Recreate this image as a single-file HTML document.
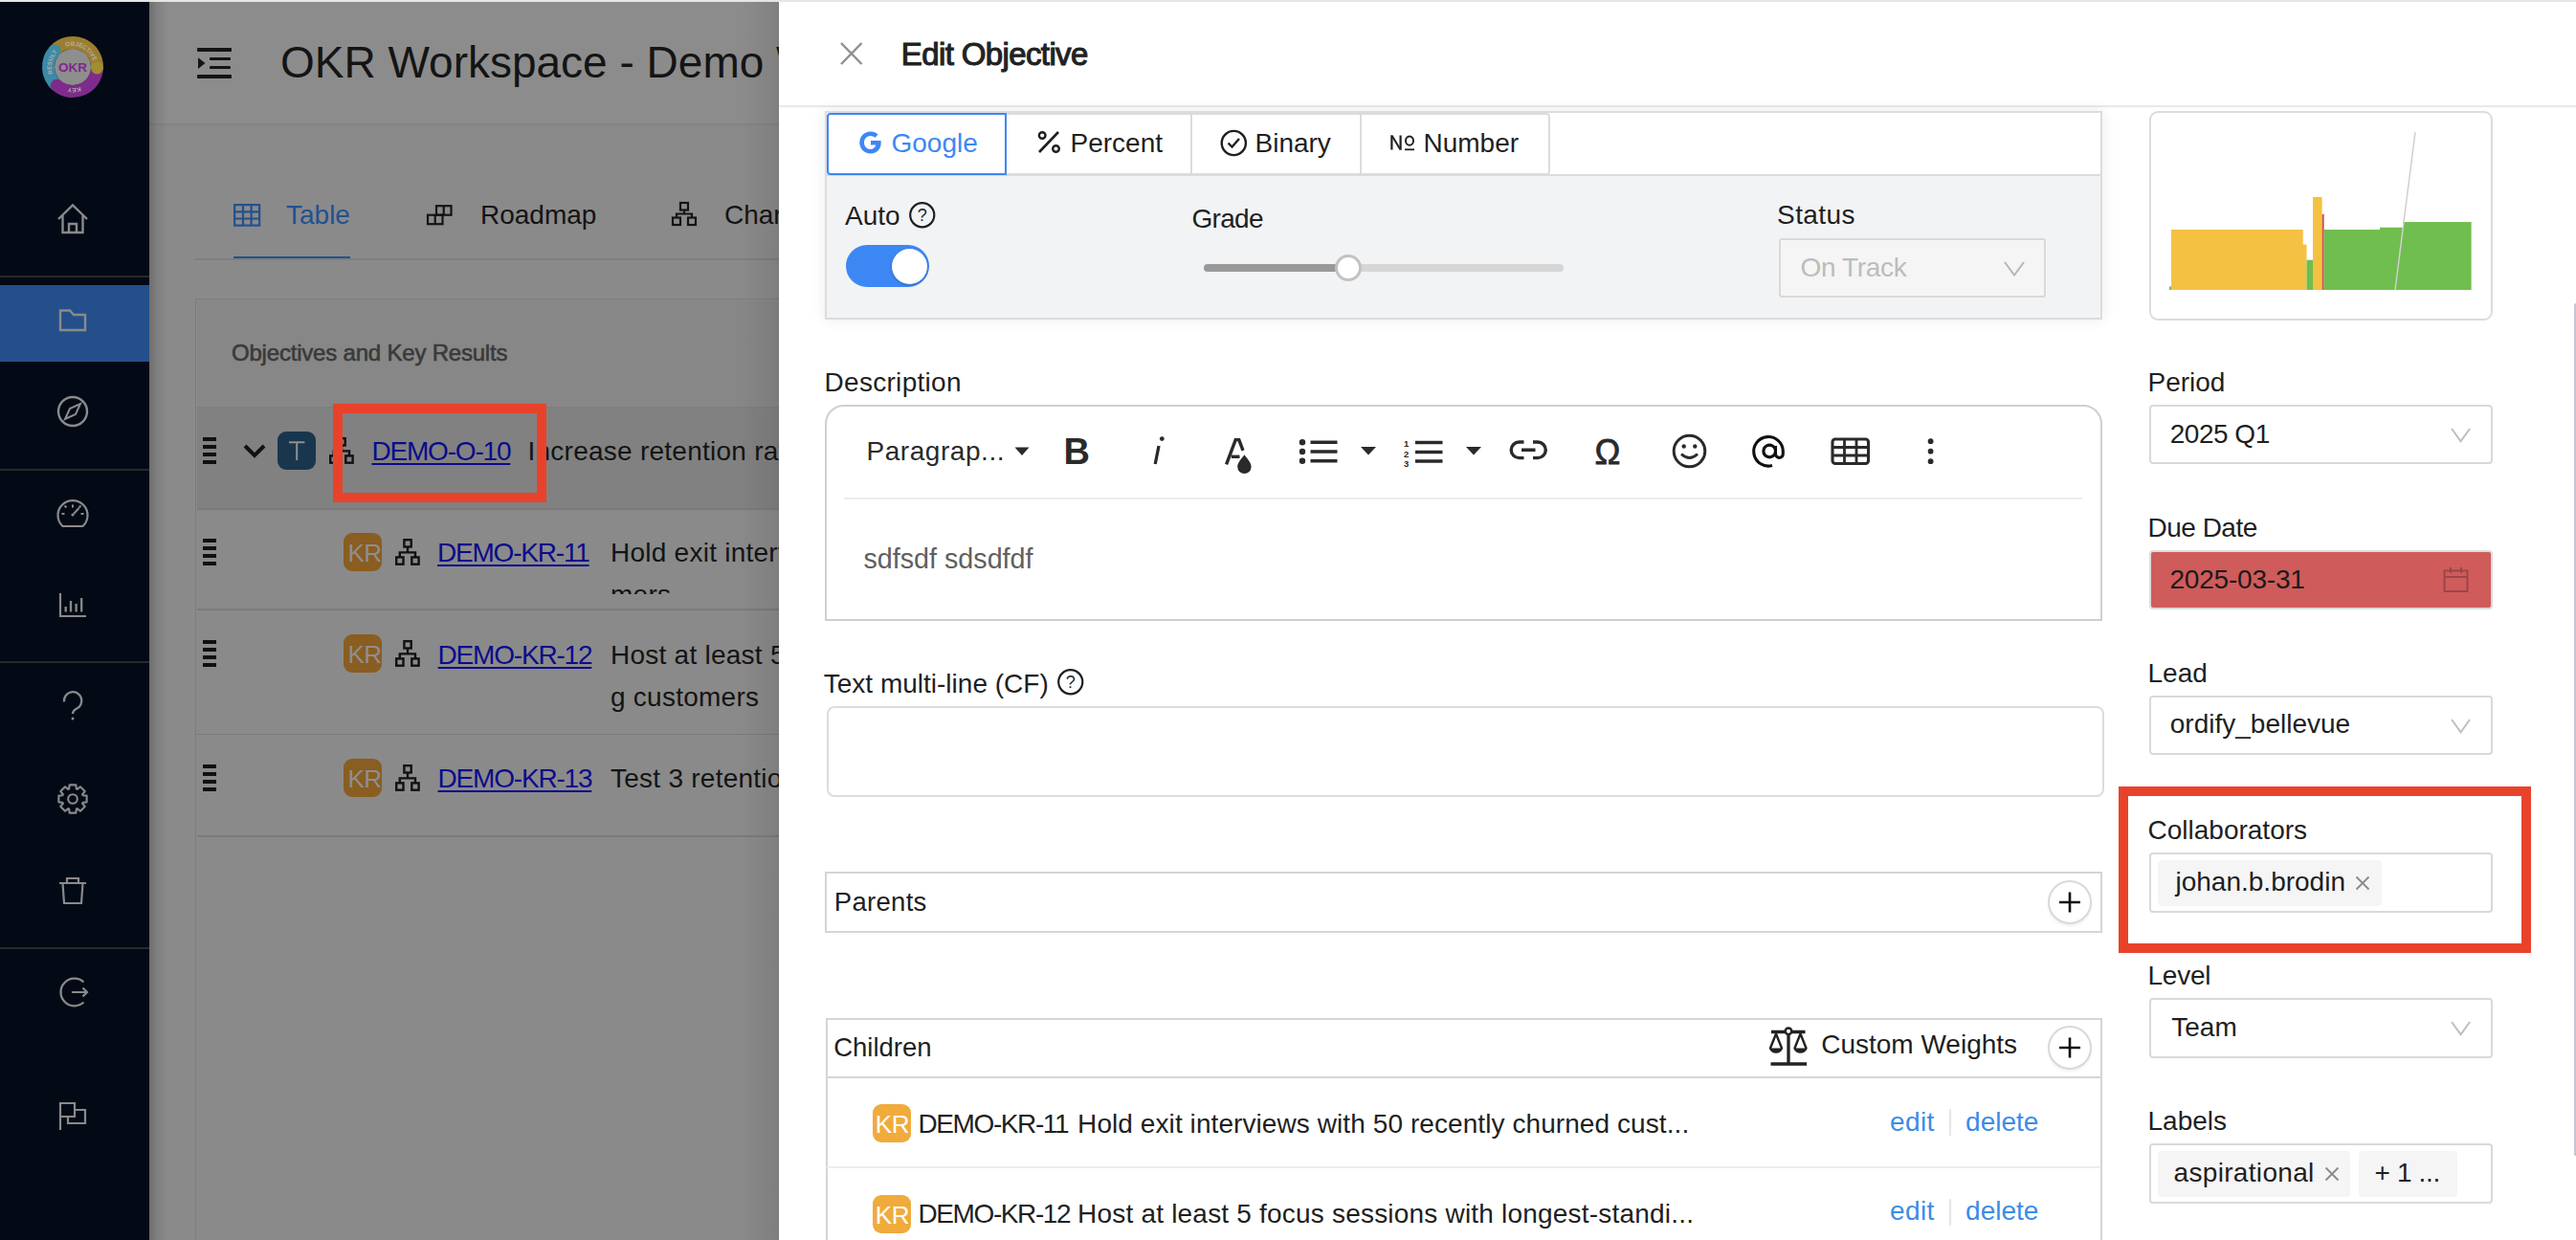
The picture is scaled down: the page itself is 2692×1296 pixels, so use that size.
<!DOCTYPE html>
<html><head><meta charset="utf-8">
<style>
html,body{margin:0;padding:0;}
body{width:2692px;height:1296px;overflow:hidden;position:relative;background:#e4e6e4;font-family:"Liberation Sans",sans-serif;}
.a{position:absolute;}
.t{position:absolute;white-space:nowrap;line-height:1;font-family:"Liberation Sans",sans-serif;}
svg{position:absolute;overflow:visible;}
</style></head>
<body>
<!-- ============ SIDEBAR ============ -->
<div class="a" id="sidebar" style="left:0;top:2px;width:156px;height:1294px;background:#030a16;">
</div>
<div class="a" style="left:0;top:288px;width:156px;height:2px;background:#2a2926;"></div>
<div class="a" style="left:0;top:298px;width:156px;height:80px;background:#244f8a;"></div>
<div class="a" style="left:0;top:490px;width:156px;height:2px;background:#2a2926;"></div>
<div class="a" style="left:0;top:691px;width:156px;height:2px;background:#2a2926;"></div>
<div class="a" style="left:0;top:990px;width:156px;height:2px;background:#2a2926;"></div>
<svg width="2692" height="1296" style="left:0;top:0;" viewBox="0 0 2692 1296">
  <!-- logo -->
  <defs><path id="lgc" d="M65.00,89.05 A22.0,22.0 0 1 1 87.00,50.95 A22.0,22.0 0 1 1 65.00,89.05"/></defs>
  <g fill="none" stroke-width="13">
   <path d="M101.48,70.89 A25.5,25.5 0 0 1 59.27,89.25" stroke="#7e2b8c"/>
   <path d="M59.27,89.25 A25.5,25.5 0 0 1 57.05,52.94" stroke="#3b8aa7"/>
   <path d="M57.05,52.94 A25.5,25.5 0 0 1 101.48,70.89" stroke="#9c7e2e"/>
  </g>
  <circle cx="59.27" cy="89.25" r="6.5" fill="#7e2b8c"/>
  <circle cx="57.05" cy="52.94" r="6.5" fill="#3b8aa7"/>
  <circle cx="101.48" cy="70.89" r="6.5" fill="#a08e30"/>
  <circle cx="76" cy="70" r="19" fill="#8e8e8e"/>
  <text x="76" y="74.8" text-anchor="middle" font-family="Liberation Sans" font-weight="bold" font-size="13.5" fill="#7d2a8c">OKR</text>
  <text font-family="Liberation Sans" font-size="6.3" font-weight="bold" fill="#b0b0b0" text-anchor="middle"><textPath href="#lgc" startOffset="28.03">RESULT</textPath></text>
  <text font-family="Liberation Sans" font-size="6.3" font-weight="bold" fill="#b0b0b0" text-anchor="middle"><textPath href="#lgc" startOffset="68.35">OBJECTIVE</textPath></text>
  <text font-family="Liberation Sans" font-size="6.3" font-weight="bold" fill="#b0b0b0" text-anchor="middle"><textPath href="#lgc" startOffset="125.56">KEY</textPath></text>

  <g fill="none" stroke="#8a8a8a" stroke-width="2.4" stroke-linejoin="miter">
    <!-- home -->
    <path d="M61,229 L76,214.5 L91,229 M65.5,225 V243 H86.5 V225 M72,243 V234 H80 V243"/>
    <!-- folder -->
    <path d="M63,324.5 H73 L77,329 H89 V345 H63 Z"/>
    <!-- compass -->
    <circle cx="76" cy="430" r="15"/>
    <path d="M68,438 L73,427 L84,422 L79,433 Z" stroke-width="2"/>
    <!-- gauge -->
    <path d="M65.5,550 A15.5,15.5 0 1 1 86.5,550 Z" stroke-width="2.2"/>
    <path d="M76,527.5 v3 M64.5,537 h3 M84.5,537 h3 M67.5,528.5 l2,2 M84.5,528.5 l-2,2 M77,537 L82.5,531" stroke-width="2"/>
    <circle cx="76" cy="538" r="1.6" fill="#8a8a8a" stroke="none"/>
    <!-- chart -->
    <path d="M63,620 V644 H90" stroke-width="2.2"/>
    <path d="M68.7,639.5 v-5.5 M74,639.5 v-11.5 M79.6,639.5 v-8.5 M85.2,639.5 v-14.5" stroke-width="2.3"/>
    <!-- question -->
    <path d="M67,733.5 A9.2,9.2 0 1 1 79.5,741 Q76,743 76,746" stroke-width="2.3"/>
    <circle cx="76" cy="751" r="1.5" fill="#8a8a8a" stroke="none"/>
    <!-- gear -->
    <path d="M72.17,824.48 L72.63,820.38 L79.37,820.38 L79.83,824.48 L80.73,824.85 L83.95,822.28 L88.72,827.05 L86.15,830.27 L86.52,831.17 L90.62,831.63 L90.62,838.37 L86.52,838.83 L86.15,839.73 L88.72,842.95 L83.95,847.72 L80.73,845.15 L79.83,845.52 L79.37,849.62 L72.63,849.62 L72.17,845.52 L71.27,845.15 L68.05,847.72 L63.28,842.95 L65.85,839.73 L65.48,838.83 L61.38,838.37 L61.38,831.63 L65.48,831.17 L65.85,830.27 L63.28,827.05 L68.05,822.28 L71.27,824.85 Z" stroke-width="2.1" stroke-linejoin="round"/>
    <circle cx="76" cy="835" r="4.8" stroke-width="2.1"/>
    <!-- trash -->
    <path d="M62,923 H90 M70,923 V918 H82 V923 M65.5,923 L67,944 H85 L86.5,923" stroke-width="2.2"/>
    <!-- logout -->
    <path d="M87.5,1026.5 A14.3,14.3 0 1 0 87.5,1047.5" stroke-width="2.3"/>
    <path d="M75,1037 H91 M86.5,1032.5 L91,1037 L86.5,1041.5" stroke-width="2.2"/>
    <!-- flag -->
    <path d="M63,1181 V1153 H78 V1167 H63 M78,1160 H89 V1174 H71 V1167" stroke-width="2.2"/>
  </g>
</svg>

<!-- ============ MAIN (dimmed) ============ -->
<div class="a" id="main" style="left:156px;top:2px;width:658px;height:1294px;background:#8a8a8a;overflow:hidden;">
</div>
<div class="a" style="left:156px;top:2px;width:658px;height:127px;background:#8c8c8c;"></div>
<div class="a" style="left:156px;top:129px;width:658px;height:1px;background:#838383;"></div>
<div class="a" style="left:156px;top:130px;width:658px;height:3px;background:linear-gradient(rgba(0,0,0,0.03),rgba(0,0,0,0));"></div>
<!-- hamburger -->
<div class="a" style="left:206px;top:50px;width:36px;height:3.5px;background:#141414;border-radius:1px;"></div>
<div class="a" style="left:219px;top:59.8px;width:22px;height:3px;background:#141414;border-radius:1px;"></div>
<div class="a" style="left:219px;top:69px;width:22px;height:3px;background:#141414;border-radius:1px;"></div>
<div class="a" style="left:206px;top:78.3px;width:36px;height:3.7px;background:#141414;border-radius:1px;"></div>
<svg width="10" height="14" style="left:206px;top:59px;"><path d="M1,1.2 L8.4,7 L1,12.9 Z" fill="#141414"/></svg>
<!-- title -->
<div class="t" id="title" style="left:293px;top:42px;font-size:46px;color:#141414;">OKR Workspace - Demo Workspace</div>
<!-- tabs -->
<svg width="30" height="24" style="left:244px;top:213px;" fill="none" stroke="#23518f" stroke-width="2.2">
  <rect x="1.1" y="1.1" width="26" height="21.5"/>
  <path d="M1,8.3 H27 M1,15.5 H27 M10,1 V22.6 M18.6,1 V22.6"/>
</svg>
<div class="t" id="tabTable" style="left:299px;top:211px;font-size:28px;color:#23518f;">Table</div>
<div class="a" style="left:244px;top:268px;width:122px;height:4px;background:#23518f;"></div>
<div class="a" style="left:204px;top:270px;width:610px;height:1.5px;background:#7e7e7e;"></div>
<svg width="30" height="24" style="left:445px;top:214px;" fill="none" stroke="#141414" stroke-width="2.2">
  <rect x="11" y="1.2" width="15.5" height="9.5"/>
  <rect x="2" y="10.7" width="15.5" height="9.5"/>
  <path d="M18.7,1.2 V10.7 M9.7,10.7 V20.2"/>
</svg>
<div class="t" id="tabRoad" style="left:502px;top:211px;font-size:28px;color:#141414;">Roadmap</div>
<svg width="30" height="30" style="left:701px;top:210px;" fill="none" stroke="#141414" stroke-width="2.2">
  <rect x="10" y="2" width="8" height="7.5"/>
  <rect x="2" y="17.5" width="8" height="7.5"/>
  <rect x="18" y="17.5" width="8" height="7.5"/>
  <path d="M14,9.5 V13.5 M6,17.5 V13.5 H22 V17.5"/>
</svg>
<div class="t" id="tabChart" style="left:757px;top:211px;font-size:28px;color:#141414;">Charts</div>

<!-- table -->
<div class="a" style="left:204px;top:312px;width:620px;height:990px;border-left:1.5px solid #7c7c7c;border-top:1.5px solid #7c7c7c;background:#8a8a8a;"></div>
<div class="a" style="left:206px;top:314px;width:620px;height:111px;background:#878787;"></div>
<div class="a" style="left:206px;top:425px;width:620px;height:1.5px;background:#7e7e7e;"></div>
<div class="t" id="thOKR" style="left:242px;top:356.7px;font-size:24px;color:#3a3a3a;-webkit-text-stroke:0.6px #3a3a3a;letter-spacing:-0.2px;">Objectives and Key Results</div>
<!-- row 1 -->
<div class="a" style="left:206px;top:426px;width:620px;height:106px;background:#818181;"></div>
<div class="a" style="left:206px;top:531px;width:620px;height:1.5px;background:#7b7b7b;"></div>
<div class="a" style="left:206px;top:636px;width:620px;height:1.5px;background:#7b7b7b;"></div>
<div class="a" style="left:206px;top:766.5px;width:620px;height:1.5px;background:#7b7b7b;"></div>
<div class="a" style="left:206px;top:873px;width:620px;height:1.5px;background:#7b7b7b;"></div>
<div class="a" style="left:212px;top:457px;width:14px;height:4px;background:#111;"></div>
<div class="a" style="left:212px;top:465px;width:14px;height:4px;background:#111;"></div>
<div class="a" style="left:212px;top:473px;width:14px;height:4px;background:#111;"></div>
<div class="a" style="left:212px;top:481px;width:14px;height:4px;background:#111;"></div>
<svg width="30" height="20" style="left:252px;top:462px;"><path d="M4,4 L14,14 L24,4" fill="none" stroke="#111" stroke-width="4"/></svg>
<div class="a" style="left:290px;top:451px;width:40px;height:40px;border-radius:9px;background:#19364f;"></div>
<svg width="20" height="24" style="left:300px;top:459px;"><path d="M2,3.2 H18.4 M10.2,3 V22" fill="none" stroke="#8f8f8f" stroke-width="2"/></svg>
<svg width="27" height="29" style="left:344px;top:457px;" fill="none" stroke="#111" stroke-width="2.4"><rect x="9.4" y="1.2" width="7.3" height="7.3"/><rect x="1.2" y="19.4" width="7.3" height="7.3"/><rect x="17.3" y="19.4" width="7.3" height="7.3"/><path d="M13,8.5 V14.4 M4.8,19.4 V14.4 H21 V19.4"/></svg>
<div class="t" id="link1" style="left:388.5px;top:458.3px;font-size:28px;color:#0b0b8c;text-decoration:underline;text-decoration-thickness:2px;text-underline-offset:3px;letter-spacing:-1.2px;">DEMO-O-10</div>
<div class="t" style="left:551.5px;top:458.3px;font-size:28px;color:#141414;letter-spacing:0.25px;">Increase retention rate for enterprise customers</div>
<div class="a" style="left:212px;top:563px;width:14px;height:4px;background:#111;"></div>
<div class="a" style="left:212px;top:571px;width:14px;height:4px;background:#111;"></div>
<div class="a" style="left:212px;top:579px;width:14px;height:4px;background:#111;"></div>
<div class="a" style="left:212px;top:587px;width:14px;height:4px;background:#111;"></div>
<div class="a" style="left:359px;top:557px;width:40px;height:40px;border-radius:9px;background:#8a5d21;"></div>
<div class="t" style="left:363.5px;top:565.0px;font-size:26px;color:#8f8f8f;letter-spacing:-0.5px;">KR</div>
<svg width="27" height="29" style="left:413px;top:563px;" fill="none" stroke="#111" stroke-width="2.4"><rect x="9.4" y="1.2" width="7.3" height="7.3"/><rect x="1.2" y="19.4" width="7.3" height="7.3"/><rect x="17.3" y="19.4" width="7.3" height="7.3"/><path d="M13,8.5 V14.4 M4.8,19.4 V14.4 H21 V19.4"/></svg>
<div class="t" id="link2" style="left:457px;top:564.3px;font-size:28px;color:#0b0b8c;text-decoration:underline;text-decoration-thickness:2px;text-underline-offset:3px;letter-spacing:-1.2px;">DEMO-KR-11</div>
<div class="a" style="left:638px;top:560px;width:400px;height:61px;overflow:hidden;"><div class="t" style="left:0px;top:4.3px;font-size:28px;color:#141414;letter-spacing:0.25px;">Hold exit interviews with 50</div>
<div class="t" style="left:0px;top:47.9px;font-size:28px;color:#141414;letter-spacing:0.25px;">mers</div>
</div>
<div class="a" style="left:212px;top:669px;width:14px;height:4px;background:#111;"></div>
<div class="a" style="left:212px;top:677px;width:14px;height:4px;background:#111;"></div>
<div class="a" style="left:212px;top:685px;width:14px;height:4px;background:#111;"></div>
<div class="a" style="left:212px;top:693px;width:14px;height:4px;background:#111;"></div>
<div class="a" style="left:359px;top:663px;width:40px;height:40px;border-radius:9px;background:#8a5d21;"></div>
<div class="t" style="left:363.5px;top:671.0px;font-size:26px;color:#8f8f8f;letter-spacing:-0.5px;">KR</div>
<svg width="27" height="29" style="left:413px;top:669px;" fill="none" stroke="#111" stroke-width="2.4"><rect x="9.4" y="1.2" width="7.3" height="7.3"/><rect x="1.2" y="19.4" width="7.3" height="7.3"/><rect x="17.3" y="19.4" width="7.3" height="7.3"/><path d="M13,8.5 V14.4 M4.8,19.4 V14.4 H21 V19.4"/></svg>
<div class="t" style="left:457.6px;top:671.1px;font-size:28px;color:#0b0b8c;text-decoration:underline;text-decoration-thickness:2px;text-underline-offset:3px;letter-spacing:-1.2px;">DEMO-KR-12</div>
<div class="t" style="left:638px;top:671.1px;font-size:28px;color:#141414;letter-spacing:0.25px;">Host at least 5 focus sessions</div>
<div class="t" style="left:638px;top:714.7px;font-size:28px;color:#141414;letter-spacing:0.25px;">g customers</div>
<div class="a" style="left:212px;top:799px;width:14px;height:4px;background:#111;"></div>
<div class="a" style="left:212px;top:807px;width:14px;height:4px;background:#111;"></div>
<div class="a" style="left:212px;top:815px;width:14px;height:4px;background:#111;"></div>
<div class="a" style="left:212px;top:823px;width:14px;height:4px;background:#111;"></div>
<div class="a" style="left:359px;top:793px;width:40px;height:40px;border-radius:9px;background:#8a5d21;"></div>
<div class="t" style="left:363.5px;top:801.0px;font-size:26px;color:#8f8f8f;letter-spacing:-0.5px;">KR</div>
<svg width="27" height="29" style="left:413px;top:799px;" fill="none" stroke="#111" stroke-width="2.4"><rect x="9.4" y="1.2" width="7.3" height="7.3"/><rect x="1.2" y="19.4" width="7.3" height="7.3"/><rect x="17.3" y="19.4" width="7.3" height="7.3"/><path d="M13,8.5 V14.4 M4.8,19.4 V14.4 H21 V19.4"/></svg>
<div class="t" style="left:457.6px;top:800.0px;font-size:28px;color:#0b0b8c;text-decoration:underline;text-decoration-thickness:2px;text-underline-offset:3px;letter-spacing:-1.2px;">DEMO-KR-13</div>
<div class="t" style="left:638px;top:800.0px;font-size:28px;color:#141414;letter-spacing:0.25px;">Test 3 retention offers</div>
<div class="a" style="left:348px;top:422px;width:203px;height:82.5px;border:10px solid #e8432a;"></div>


<!-- ============ DRAWER ============ -->
<div class="a" style="left:156px;top:2px;width:20px;height:1294px;background:linear-gradient(to right,rgba(0,0,0,0.21),rgba(0,0,0,0.08) 40%,rgba(0,0,0,0));"></div>
<div class="a" style="left:772px;top:2px;width:42px;height:1294px;background:linear-gradient(to right,rgba(0,0,0,0),rgba(0,0,0,0.08) 95%,rgba(0,0,0,0.12));"></div>
<!--DRAWER-START-->
<div class="a" style="left:814px;top:2px;width:1878.00px;height:1294.00px;box-sizing:border-box;background:#fff;"></div>
<svg width="26" height="26" style="left:877px;top:43px;" viewBox="0 0 26 26"><path d="M2,2 L23.5,24 M23.5,2 L2,24" stroke="#909090" stroke-width="2.5" fill="none"/></svg>
<div class="t" id="dtitle" style="left:941.8px;top:39.67px;font-size:33px;color:#222;-webkit-text-stroke:1.1px #222;letter-spacing:-0.62px;">Edit Objective</div>
<div class="a" style="left:814px;top:110px;width:1878.00px;height:1.50px;box-sizing:border-box;background:#e9e9e9;"></div>
<div class="a" style="left:814px;top:111.5px;width:1878.00px;height:4.50px;box-sizing:border-box;background:linear-gradient(rgba(0,0,0,0.015),rgba(0,0,0,0));"></div>
<div class="a" style="left:862px;top:116px;width:1335.00px;height:218.00px;box-sizing:border-box;border:2px solid #dcdcde;background:#fff;box-shadow:0 0 14px rgba(20,30,60,0.09);"></div>
<div class="a" style="left:864px;top:182px;width:1331.00px;height:150.00px;box-sizing:border-box;background:#f2f3f5;border-top:2px solid #dcdcde;"></div>
<div class="a" style="left:1050px;top:118px;width:196.00px;height:65.00px;box-sizing:border-box;border:2px solid #dcdcde;border-left:none;"></div>
<div class="a" style="left:1244px;top:118px;width:179.00px;height:65.00px;box-sizing:border-box;border:2px solid #dcdcde;border-left:none;"></div>
<div class="a" style="left:1421px;top:118px;width:199.00px;height:65.00px;box-sizing:border-box;border:2px solid #dcdcde;border-left:none;border-radius:0 4px 4px 0;"></div>
<div class="a" style="left:864px;top:118px;width:188.00px;height:65.00px;box-sizing:border-box;border:2px solid #3d87f5;border-radius:4px 0 0 4px;"></div>
<svg width="26" height="26" style="left:897px;top:136px;" viewBox="0 0 26 26"><path d="M23.5,11 H13 V15.5 H18.3 C17.4,18.3 15.4,20 12.6,20 C8.9,20 6,17 6,13 C6,9 8.9,6 12.6,6 C14.5,6 16.1,6.7 17.3,7.9 L20.6,4.6 C18.6,2.7 15.8,1.5 12.6,1.5 C6.3,1.5 1.3,6.6 1.3,13 C1.3,19.4 6.3,24.5 12.6,24.5 C19,24.5 23.7,20 23.7,13.2 C23.7,12.4 23.6,11.7 23.5,11 Z" fill="#3d87f5"/></svg>
<div class="t" id="sgoogle" style="left:931.5px;top:135.90px;font-size:28px;color:#3d87f5;">Google</div>
<svg width="25" height="25" style="left:1084px;top:136px;" viewBox="0 0 25 25"><path d="M2,23 L22,2" stroke="#1f1f1f" stroke-width="2.6"/><circle cx="5.2" cy="5.5" r="3.3" fill="none" stroke="#1f1f1f" stroke-width="2.4"/><circle cx="19.5" cy="19.5" r="3.3" fill="none" stroke="#1f1f1f" stroke-width="2.4"/></svg>
<div class="t" id="spercent" style="left:1118.5px;top:135.90px;font-size:28px;color:#1f1f1f;">Percent</div>
<svg width="29" height="29" style="left:1275px;top:135px;" viewBox="0 0 29 29"><circle cx="14.3" cy="14.5" r="12.6" fill="none" stroke="#1f1f1f" stroke-width="2.4"/><path d="M8.5,14.5 L12.5,18.5 L20,10" fill="none" stroke="#1f1f1f" stroke-width="2.4"/></svg>
<div class="t" id="sbinary" style="left:1311.5px;top:135.90px;font-size:28px;color:#1f1f1f;">Binary</div>
<svg width="28" height="19" style="left:1452px;top:140px;" viewBox="0 0 28 19"><path d="M2.4,16.6 V1.6 M11.6,16.6 V1.6" fill="none" stroke="#1f1f1f" stroke-width="2.2"/><path d="M1.3,1.6 H3.6 L12.7,16.6 H10.4 Z" fill="#1f1f1f"/><ellipse cx="21" cy="7.2" rx="4" ry="4.6" fill="none" stroke="#1f1f1f" stroke-width="2"/><path d="M16,16.3 H26" stroke="#1f1f1f" stroke-width="1.8"/></svg>
<div class="t" id="snumber" style="left:1487.5px;top:135.90px;font-size:28px;color:#1f1f1f;">Number</div>
<div class="t" id="lauto" style="left:883.1px;top:212.30px;font-size:28px;color:#1f1f1f;">Auto</div>
<svg width="27.5" height="27.5" style="left:950px;top:211px;" viewBox="0 0 27.5 27.5"><circle cx="13.75" cy="13.75" r="12.55" fill="none" stroke="#1f1f1f" stroke-width="2.2"/><text x="13.75" y="20.05" text-anchor="middle" font-family="Liberation Sans" font-size="18" fill="#1f1f1f">?</text></svg>
<div class="a" style="left:884px;top:256px;width:87.00px;height:44.00px;box-sizing:border-box;background:#3d87f5;border-radius:22px;"></div>
<div class="a" style="left:931.5px;top:259.5px;width:37.00px;height:37.00px;box-sizing:border-box;background:#fff;border-radius:50%;box-shadow:0 1px 3px rgba(0,0,0,0.25);"></div>
<div class="t" id="lgrade" style="left:1245.5px;top:215.30px;font-size:28px;color:#1f1f1f;letter-spacing:-0.7px;">Grade</div>
<div class="a" style="left:1258px;top:276px;width:376.00px;height:8.00px;box-sizing:border-box;background:#d6d6d6;border-radius:4px;"></div>
<div class="a" style="left:1258px;top:276px;width:151.00px;height:8.00px;box-sizing:border-box;background:#999;border-radius:4px 0 0 4px;"></div>
<div class="a" style="left:1395px;top:266px;width:28.00px;height:28.00px;box-sizing:border-box;background:#fff;border:3.5px solid #c2c2c2;border-radius:50%;"></div>
<div class="t" id="lstatus" style="left:1857.1px;top:211.30px;font-size:28px;color:#1f1f1f;letter-spacing:0.4px;">Status</div>
<div class="a" style="left:1859px;top:249px;width:279.00px;height:62.00px;box-sizing:border-box;background:#f5f5f5;border:2px solid #d9d9d9;border-radius:3px;"></div>
<div class="t" id="vstatus" style="left:1881.5px;top:266.30px;font-size:28px;color:#bcbcbc;letter-spacing:-0.35px;">On Track</div>
<svg width="22" height="16" style="left:2094px;top:273px;" viewBox="0 0 22 16"><path d="M1,1 L11.0,14.5 L21,1" fill="none" stroke="#b5b5b5" stroke-width="2"/></svg>
<div class="a" style="left:2245.5px;top:116.2px;width:359.00px;height:219.30px;box-sizing:border-box;border:2px solid #dcdcdc;border-radius:9px;"></div>
<svg width="330" height="190" style="left:2266px;top:117px;" viewBox="0 0 330 190"><path d="M1,186 V182.5 H3 V186 Z" fill="#6fbe4f"/>
<path d="M3,186 V123 H140.7 V138.6 H144.5 V186 Z" fill="#f4c142"/>
<path d="M144.5,186 V154.7 H151 V186 Z" fill="#6fbe4f"/>
<path d="M151,186 V89 H160.6 V186 Z" fill="#f4c142"/>
<path d="M160.6,186 V106.8 H162.7 V186 Z" fill="#d05050"/>
<path d="M162.7,186 V123 H221 V120.8 H245 V114.9 H316.6 V186 Z" fill="#6fbe4f"/>
<path d="M237,186 L258,20.8" stroke="#d0d0d0" stroke-width="1.5" fill="none"/></svg>
<div class="t" id="ldesc" style="left:861.5px;top:385.70px;font-size:28px;color:#1f1f1f;letter-spacing:0.3px;">Description</div>
<div class="a" style="left:862px;top:423px;width:1335.00px;height:226.00px;box-sizing:border-box;border:2px solid #cfcfcf;border-radius:20px 20px 0 0;"></div>
<div class="a" style="left:882px;top:519.5px;width:1294.00px;height:2.00px;box-sizing:border-box;background:#ececec;"></div>
<div class="t" id="tpara" style="left:905.5px;top:457.70px;font-size:28px;color:#2a2a2a;letter-spacing:0.55px;">Paragrap...</div>
<svg width="16" height="10" style="left:1060px;top:467px;" viewBox="0 0 16 10"><path d="M0.5,0.5 H15.5 L8,9 Z" fill="#2a2a2a"/></svg>
<div class="t" id="tbold" style="left:1111.5px;top:453.33px;font-size:38px;color:#2a2a2a;font-weight:bold;">B</div>
<svg width="16" height="34" style="left:1203px;top:455px;" viewBox="0 0 16 34"><circle cx="11.3" cy="3.6" r="2.4" fill="#2a2a2a"/><path d="M8,11 L4.2,30" stroke="#2a2a2a" stroke-width="3.3" fill="none"/></svg>
<svg width="32" height="40" style="left:1279px;top:456px;" viewBox="0 0 32 40"><path d="M2.6,29.4 L12.2,3.6 H15.8 L20,14.8" fill="none" stroke="#2a2a2a" stroke-width="3.4" stroke-linejoin="miter"/><path d="M7.8,21.3 H16.5" stroke="#2a2a2a" stroke-width="3.4"/><path d="M21.4,19.3 C17.5,24.5 14.2,28 14.2,31.8 A7.2,7.2 0 0 0 28.6,31.8 C28.6,28 25.3,24.5 21.4,19.3 Z" fill="#2a2a2a"/></svg>
<svg width="84" height="30" style="left:1357px;top:458px;" viewBox="0 0 84 30"><circle cx="4" cy="4.3" r="3.2" fill="#2a2a2a"/><circle cx="4" cy="14" r="3.2" fill="#2a2a2a"/><circle cx="4" cy="23.7" r="3.2" fill="#2a2a2a"/><path d="M12.5,4.3 H40.5 M12.5,14 H40.5 M12.5,23.7 H40.5" stroke="#2a2a2a" stroke-width="3.4"/><path d="M65,9 H81 L73,17.5 Z" fill="#2a2a2a"/></svg>
<svg width="84" height="32" style="left:1467px;top:457px;" viewBox="0 0 84 32"><text x="0" y="10" font-family="Liberation Sans" font-size="9.5" font-weight="bold" fill="#2a2a2a">1</text><text x="0" y="20.5" font-family="Liberation Sans" font-size="9.5" font-weight="bold" fill="#2a2a2a">2</text><text x="0" y="30.5" font-family="Liberation Sans" font-size="9.5" font-weight="bold" fill="#2a2a2a">3</text><path d="M12,5.5 H40.5 M12,15.5 H40.5 M12,25 H40.5" stroke="#2a2a2a" stroke-width="3.4"/><path d="M65,10 H81 L73,18.5 Z" fill="#2a2a2a"/></svg>
<svg width="42" height="25" style="left:1577px;top:459px;" viewBox="0 0 42 25"><path d="M15.5,3 H10.5 A8.3,8.3 0 0 0 10.5,19.6 H15.5 M25,3 H30 A8.3,8.3 0 0 1 30,19.6 H25 M13,11.3 H27.5" fill="none" stroke="#2a2a2a" stroke-width="3.4"/></svg>
<div class="t" id="tomega" style="left:1666.5px;top:454.53px;font-size:36px;color:#2a2a2a;-webkit-text-stroke:0.8px #2a2a2a;">&#937;</div>
<svg width="38" height="38" style="left:1747px;top:453px;" viewBox="0 0 38 38"><circle cx="18.5" cy="18.5" r="16.3" fill="none" stroke="#2a2a2a" stroke-width="3"/><circle cx="12.7" cy="13.5" r="2.2" fill="#2a2a2a"/><circle cx="24.3" cy="13.5" r="2.2" fill="#2a2a2a"/><path d="M10,21.5 Q18.5,29.5 27,21.5" fill="none" stroke="#2a2a2a" stroke-width="2.8"/></svg>
<svg width="38" height="38" style="left:1831px;top:453px;" viewBox="0 0 38 38"><path d="M24.5,18.5 A6.3,6.3 0 1 1 24.5,18.4 Z M24.5,13 V21.5 A3.8,3.8 0 0 0 32.3,21.5 V18.5 A15.3,15.3 0 1 0 21,33.6" fill="none" stroke="#111" stroke-width="3.1"/></svg>
<svg width="42" height="30" style="left:1913px;top:457px;" viewBox="0 0 42 30"><rect x="2" y="2" width="37.5" height="25.5" rx="3" fill="none" stroke="#2a2a2a" stroke-width="3.1"/><path d="M2,10.5 H39.5 M2,19 H39.5 M14.5,2 V27.5 M27,2 V27.5" stroke="#2a2a2a" stroke-width="2.8"/></svg>
<svg width="12" height="30" style="left:2012px;top:457px;" viewBox="0 0 12 30"><circle cx="5.6" cy="4.2" r="2.9" fill="#2a2a2a"/><circle cx="5.6" cy="14.7" r="2.9" fill="#2a2a2a"/><circle cx="5.6" cy="25.2" r="2.9" fill="#2a2a2a"/></svg>
<div class="t" id="tcontent" style="left:902.5px;top:569.71px;font-size:28.7px;color:#606060;">sdfsdf sdsdfdf</div>
<div class="t" id="ltml" style="left:860.8px;top:700.70px;font-size:28px;color:#1f1f1f;">Text multi-line (CF)</div>
<svg width="27.5" height="27.5" style="left:1105px;top:699px;" viewBox="0 0 27.5 27.5"><circle cx="13.75" cy="13.75" r="12.55" fill="none" stroke="#1f1f1f" stroke-width="2.2"/><text x="13.75" y="20.05" text-anchor="middle" font-family="Liberation Sans" font-size="18" fill="#1f1f1f">?</text></svg>
<div class="a" style="left:864px;top:737.5px;width:1334.50px;height:95.00px;box-sizing:border-box;border:2px solid #dcdcde;border-radius:8px;"></div>
<div class="a" style="left:862px;top:911px;width:1335.00px;height:63.50px;box-sizing:border-box;border:2px solid #d5d5d5;"></div>
<div class="t" id="lparents" style="left:871.8px;top:928.72px;font-size:27.5px;color:#1f1f1f;letter-spacing:0.3px;">Parents</div>
<div class="a" style="left:2140px;top:919.7px;width:46.00px;height:46.00px;box-sizing:border-box;border:2px solid #d9d9d9;border-radius:50%;background:#fff;box-shadow:0 2px 3px rgba(0,0,0,0.06);"></div>
<svg width="24" height="24" style="left:2151px;top:930.7px;" viewBox="0 0 24 24"><path d="M12,1.5 V22.5 M1,12 H23" stroke="#111" stroke-width="2.6" fill="none"/></svg>
<div class="a" style="left:862.5px;top:1063.5px;width:1334.50px;height:246.50px;box-sizing:border-box;border:2px solid #d5d5d5;"></div>
<div class="a" style="left:864px;top:1125px;width:1331.00px;height:2.00px;box-sizing:border-box;background:#d5d5d5;"></div>
<div class="t" id="lchildren" style="left:871.2px;top:1081.02px;font-size:27.5px;color:#1f1f1f;">Children</div>
<svg width="44" height="42" style="left:1848px;top:1073px;" viewBox="0 0 44 42"><circle cx="21" cy="4.8" r="3.3" fill="none" stroke="#222" stroke-width="2.4"/><path d="M21,8 V37.5 M3,5.5 H17.7 M24.3,5.5 H38.5 M2.5,39 H40" stroke="#222" stroke-width="3.3" fill="none"/><path d="M8,7.5 L2,22.5 A6.5,6.5 0 0 0 14,22.5 Z M33.5,7.5 L27.5,22.5 A6.5,6.5 0 0 0 39.5,22.5 Z" fill="none" stroke="#222" stroke-width="2.4" stroke-linejoin="round"/><path d="M2.5,22.5 A6,6 0 0 0 13.5,22.5 Z M28,22.5 A6,6 0 0 0 39,22.5 Z" fill="#222"/></svg>
<div class="t" id="lcw" style="left:1903.2px;top:1078.30px;font-size:28px;color:#1f1f1f;">Custom Weights</div>
<div class="a" style="left:2140px;top:1071.5px;width:46.00px;height:46.00px;box-sizing:border-box;border:2px solid #d9d9d9;border-radius:50%;background:#fff;box-shadow:0 2px 3px rgba(0,0,0,0.06);"></div>
<svg width="24" height="24" style="left:2151px;top:1082.5px;" viewBox="0 0 24 24"><path d="M12,1.5 V22.5 M1,12 H23" stroke="#111" stroke-width="2.6" fill="none"/></svg>
<div class="a" style="left:912px;top:1154px;width:40.00px;height:40.00px;box-sizing:border-box;background:#f0ab3c;border-radius:9px;"></div>
<div class="t" style="left:914.8px;top:1162.19px;font-size:26px;color:#ffffff;letter-spacing:-0.5px;">KR</div>
<div class="t" style="left:959.5px;top:1161.30px;font-size:28px;color:#1f1f1f;letter-spacing:-1.4px;">DEMO-KR-11</div>
<div class="t" id="c1" style="left:1126.1px;top:1161.30px;font-size:28px;color:#1f1f1f;letter-spacing:0.08px;">Hold exit interviews with 50 recently churned cust...</div>
<div class="a" style="left:864px;top:1219px;width:1331.00px;height:2.00px;box-sizing:border-box;background:#ededed;"></div>
<div class="t" id="edit1" style="left:1975.0px;top:1158.80px;font-size:28px;color:#3c8ce7;letter-spacing:0.4px;">edit</div>
<div class="a" style="left:2037px;top:1159px;width:2.00px;height:28.00px;box-sizing:border-box;background:#e6e6e6;"></div>
<div class="t" id="del1" style="left:2054.1px;top:1158.80px;font-size:28px;color:#3c8ce7;">delete</div>
<div class="a" style="left:912px;top:1248.5px;width:40.00px;height:40.00px;box-sizing:border-box;background:#f0ab3c;border-radius:9px;"></div>
<div class="t" style="left:914.8px;top:1256.69px;font-size:26px;color:#ffffff;letter-spacing:-0.5px;">KR</div>
<div class="t" style="left:959.5px;top:1254.80px;font-size:28px;color:#1f1f1f;letter-spacing:-1.4px;">DEMO-KR-12</div>
<div class="t" id="c2" style="left:1126.1px;top:1254.80px;font-size:28px;color:#1f1f1f;letter-spacing:0.2px;">Host at least 5 focus sessions with longest-standi...</div>
<div class="t" style="left:1975.0px;top:1252.30px;font-size:28px;color:#3c8ce7;letter-spacing:0.4px;">edit</div>
<div class="a" style="left:2037px;top:1252.5px;width:2.00px;height:28.00px;box-sizing:border-box;background:#e6e6e6;"></div>
<div class="t" style="left:2054.1px;top:1252.30px;font-size:28px;color:#3c8ce7;">delete</div>
<div class="t" id="lperiod" style="left:2244.5px;top:385.50px;font-size:28px;color:#1f1f1f;">Period</div>
<div class="a" style="left:2246px;top:422.7px;width:359.00px;height:62.30px;box-sizing:border-box;border:2px solid #d9d9d9;border-radius:4px;background:#fff;"></div>
<div class="t" id="vperiod" style="left:2267.8px;top:439.90px;font-size:28px;color:#1f1f1f;letter-spacing:-0.5px;">2025 Q1</div>
<svg width="21.09999999999991" height="15.699999999999989" style="left:2560.8px;top:447.0px;" viewBox="0 0 21.09999999999991 15.699999999999989"><path d="M1,1 L10.549999999999955,14.199999999999989 L20.09999999999991,1" fill="none" stroke="#bfbfbf" stroke-width="2"/></svg>
<div class="t" id="ldue" style="left:2244.5px;top:537.70px;font-size:28px;color:#1f1f1f;letter-spacing:-0.5px;">Due Date</div>
<div class="a" style="left:2246px;top:574.6px;width:359.00px;height:62.40px;box-sizing:border-box;border:2px solid #dcdcdc;border-radius:4px;background:#d05b5b;"></div>
<div class="t" id="vdue" style="left:2267.5px;top:591.80px;font-size:28px;color:#1a1a1a;letter-spacing:-0.2px;">2025-03-31</div>
<svg width="28" height="28" style="left:2553px;top:592px;" viewBox="0 0 28 28"><rect x="1.5" y="4.5" width="24" height="21.5" fill="none" stroke="#9b4646" stroke-width="2"/><path d="M1.5,11 H25.5 M8,1 V7 M19,1 V7" stroke="#9b4646" stroke-width="2"/></svg>
<div class="t" id="llead" style="left:2244.5px;top:689.60px;font-size:28px;color:#1f1f1f;">Lead</div>
<div class="a" style="left:2246px;top:726.5px;width:359.00px;height:62.50px;box-sizing:border-box;border:2px solid #d9d9d9;border-radius:4px;background:#fff;"></div>
<div class="t" id="vlead" style="left:2267.8px;top:742.60px;font-size:28px;color:#1f1f1f;">ordify_bellevue</div>
<svg width="21.09999999999991" height="15.700000000000045" style="left:2560.8px;top:750.8px;" viewBox="0 0 21.09999999999991 15.700000000000045"><path d="M1,1 L10.549999999999955,14.200000000000045 L20.09999999999991,1" fill="none" stroke="#bfbfbf" stroke-width="2"/></svg>
<div class="t" id="lcollab" style="left:2244.5px;top:854.30px;font-size:28px;color:#1f1f1f;">Collaborators</div>
<div class="a" style="left:2246px;top:891px;width:359.00px;height:63.00px;box-sizing:border-box;border:2px solid #d9d9d9;border-radius:4px;background:#fff;"></div>
<div class="a" style="left:2255px;top:899px;width:234.00px;height:47.50px;box-sizing:border-box;background:#f5f5f5;border-radius:4px;"></div>
<div class="t" id="vcollab" style="left:2273.5px;top:908.30px;font-size:28px;color:#1f1f1f;">johan.b.brodin</div>
<svg width="16" height="16" style="left:2461px;top:915px;" viewBox="0 0 16 16"><path d="M1.5,1.5 L14.5,14.5 M14.5,1.5 L1.5,14.5" stroke="#8a8a8a" stroke-width="1.8"/></svg>
<div class="a" style="left:2214px;top:822px;width:431.00px;height:174.00px;box-sizing:border-box;border:10px solid #e8432a;"></div>
<div class="t" id="llevel" style="left:2244.5px;top:1006.30px;font-size:28px;color:#1f1f1f;letter-spacing:-0.25px;">Level</div>
<div class="a" style="left:2246px;top:1043px;width:359.00px;height:63.00px;box-sizing:border-box;border:2px solid #d9d9d9;border-radius:4px;background:#fff;"></div>
<div class="t" id="vlevel" style="left:2269.3px;top:1060.30px;font-size:28px;color:#1f1f1f;">Team</div>
<svg width="21.09999999999991" height="15.700000000000045" style="left:2560.8px;top:1067.3px;" viewBox="0 0 21.09999999999991 15.700000000000045"><path d="M1,1 L10.549999999999955,14.200000000000045 L20.09999999999991,1" fill="none" stroke="#bfbfbf" stroke-width="2"/></svg>
<div class="t" id="llabels" style="left:2244.5px;top:1158.30px;font-size:28px;color:#1f1f1f;">Labels</div>
<div class="a" style="left:2246px;top:1195px;width:359.00px;height:63.00px;box-sizing:border-box;border:2px solid #d9d9d9;border-radius:4px;background:#fff;"></div>
<div class="a" style="left:2255px;top:1203px;width:201.00px;height:47.50px;box-sizing:border-box;background:#f5f5f5;border-radius:4px;"></div>
<div class="t" id="vlab" style="left:2271.5px;top:1212.30px;font-size:28px;color:#1f1f1f;letter-spacing:0.33px;">aspirational</div>
<svg width="16" height="16" style="left:2429px;top:1219px;" viewBox="0 0 16 16"><path d="M1.5,1.5 L14.5,14.5 M14.5,1.5 L1.5,14.5" stroke="#8a8a8a" stroke-width="1.8"/></svg>
<div class="a" style="left:2465px;top:1203px;width:103.00px;height:47.50px;box-sizing:border-box;background:#f5f5f5;border-radius:4px;"></div>
<div class="t" id="vplus" style="left:2481.5px;top:1212.30px;font-size:28px;color:#1f1f1f;letter-spacing:-0.35px;">+ 1 ...</div>
<div class="a" style="left:2689.5px;top:317px;width:3.50px;height:891.00px;box-sizing:border-box;background:#c4c4d4;border-radius:2px;"></div>
<!--DRAWER-END-->
</body></html>
